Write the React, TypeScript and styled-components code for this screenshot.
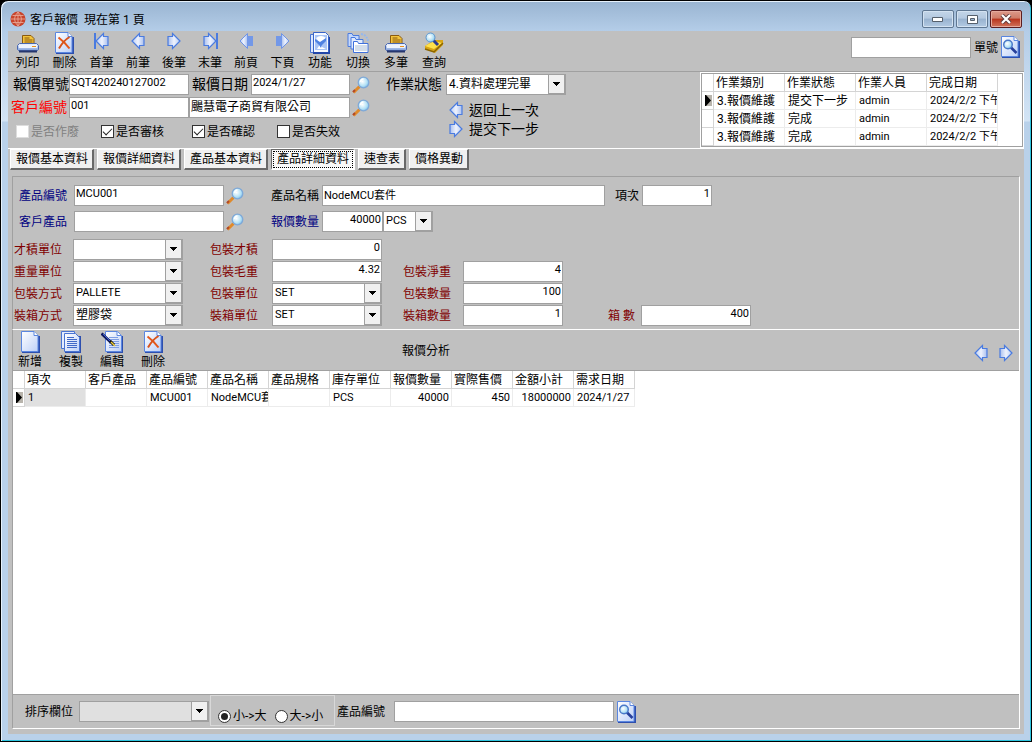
import React from "react";
import styled, { createGlobalStyle, css } from "styled-components";

const face = "#c0c0c0";
const line = "#a0a0a0";
const navy = "#000080";
const maroon = "#800000";

const GlobalStyle = createGlobalStyle`
  *, *::before, *::after { box-sizing: border-box; }
  body {
    margin: 0;
    background: #000;
    color: #000;
    font: 12px/16px Roboto, "Noto Sans CJK TC", sans-serif;
  }
  button, input, select { font: inherit; color: inherit; margin: 0; }
`;

/* ---------- window frame ---------- */

const Window = styled.div`
  display: flex;
  flex-direction: column;
  min-height: 100vh;
  padding: 1px 7px 7px;
  border: 1px solid #000;
  border-radius: 8px 8px 0 0;
  box-shadow: inset 1px 1px 0 #e6f1fb, inset -1px -1px 0 #2cc4de;
  background: linear-gradient(#99b4d1 0, #b4cde8 30px, #d3e4f5 120px, #b9d1ea 121px);
`;

const TitleBar = styled.header`
  display: flex;
  align-items: center;
  height: 29px;
  padding: 5px 2px 0;
`;

const Title = styled.h1`
  flex: 1;
  margin: 0 0 0 4px;
  padding-top: 2px;
  font-size: 12px;
  font-weight: 400;
  white-space: pre;
`;

const CaptionButtons = styled.div`
  display: flex;
  gap: 2px;
`;

const CaptionButton = styled.button<{ $close?: boolean }>`
  display: grid;
  place-items: center;
  width: 32px;
  height: 18px;
  padding: 0;
  border: 1px solid ${(p) => (p.$close ? "#5b1d20" : "#5f7792")};
  border-radius: 2px;
  box-shadow: inset 0 0 0 1px ${(p) => (p.$close ? "#e5a99c" : "#d3e2f1")};
  background: ${(p) =>
    p.$close
      ? "linear-gradient(#dc9a8b, #cf7c68 45%, #b8341d 50%, #d0745c)"
      : "linear-gradient(#c3d5e8, #b4c9e0 45%, #98b2cf 50%, #b3cae3)"};
`;

const Client = styled.main`
  display: flex;
  flex: 1;
  flex-direction: column;
  background: ${face};
`;

/* ---------- toolbars ---------- */

const ToolBar = styled.div`
  display: flex;
  height: 41px;
  padding: 1px 4px 0 1px;
  border-bottom: 1px solid ${line};
`;

const ToolButton = styled.button<{ $width: number }>`
  display: flex;
  flex-direction: column;
  align-items: center;
  justify-content: flex-end;
  gap: 1px;
  width: ${(p) => p.$width}px;
  height: 39px;
  padding: 0;
  border: 0;
  background: none;
  line-height: 16px;
  white-space: nowrap;
`;

const IconSlot = styled.span<{ $top?: boolean }>`
  display: grid;
  align-items: ${(p) => (p.$top ? "start" : "center")};
  justify-items: center;
  height: 22px;
`;

const Spacer = styled.div`
  flex: 1;
`;

const IconButton = styled.button`
  display: grid;
  place-items: center;
  padding: 0;
  border: 0;
  background: none;
`;

const QuickSearch = styled.div`
  display: flex;
  align-items: center;
  gap: 3px;
  height: 30px;
`;

/* ---------- form parts ---------- */

const Label = styled.label<{
  $width?: number;
  $indent?: number;
  $color?: string;
  $large?: boolean;
}>`
  flex: none;
  ${(p) => p.$width && css`width: ${p.$width}px;`}
  height: 21px;
  padding-left: ${(p) => p.$indent ?? 0}px;
  color: ${(p) => p.$color ?? "#000"};
  font-size: ${(p) => (p.$large ? 14 : 12)}px;
  line-height: ${(p) => (p.$large ? 21 : 23)}px;
  white-space: nowrap;
`;

const TextInput = styled.input<{ $width: number; $right?: boolean; $cjk?: boolean }>`
  flex: none;
  width: ${(p) => p.$width}px;
  height: 21px;
  padding: 0 1px 4px;
  border: 1px solid ${line};
  border-radius: 0;
  outline: 0;
  background: #fff;
  font-size: ${(p) => (p.$cjk ? 12 : 11)}px;
  text-align: ${(p) => (p.$right ? "right" : "left")};
`;

const SelectFrame = styled.span<{ $width: number; $muted?: boolean }>`
  display: grid;
  flex: none;
  grid-template-columns: 1fr 16px;
  width: ${(p) => p.$width}px;
  height: 21px;
  border: 1px solid ${line};
  border-right-width: 2px;
  background: ${(p) => (p.$muted ? "#e0e0e0" : "#fff")};
`;

const SelectBox = styled.select<{ $cjk?: boolean }>`
  grid-area: 1 / 1 / 2 / 3;
  appearance: none;
  width: 100%;
  height: 19px;
  padding: 0 17px 2px 2px;
  border: 0;
  border-radius: 0;
  outline: 0;
  background: none;
  font-size: ${(p) => (p.$cjk ? 12 : 11)}px;
`;

const SelectArrow = styled.span`
  display: grid;
  grid-area: 1 / 2;
  place-items: center;
  border: solid ${line};
  border-width: 0 0 1px 1px;
  background: #f0f0f0;
  pointer-events: none;
`;

function Select(props: {
  id: string;
  value: string;
  width: number;
  cjk?: boolean;
  muted?: boolean;
}) {
  return (
    <SelectFrame $width={props.width} $muted={props.muted}>
      <SelectBox id={props.id} $cjk={props.cjk} defaultValue={props.value}>
        <option>{props.value}</option>
      </SelectBox>
      <SelectArrow>
        <svg width="7" height="4" shapeRendering="crispEdges">
          <path d="M0 0h7v1h-1v1h-1v1h-1v1h-1v-1h-1v-1h-1v-1h-1z" />
        </svg>
      </SelectArrow>
    </SelectFrame>
  );
}

const CheckLabel = styled.label<{ $width: number; $off?: boolean }>`
  display: flex;
  align-items: center;
  gap: 2px;
  width: ${(p) => p.$width}px;
  color: ${(p) => (p.$off ? "#808080" : "#000")};
  white-space: nowrap;
`;

const CheckBox = styled.input.attrs({ type: "checkbox" })`
  appearance: none;
  flex: none;
  display: grid;
  place-items: center;
  width: 13px;
  height: 13px;
  border: 1px solid #333;
  background: #fff;
  &:disabled { border-color: #ddd; }
  &:checked::before {
    content: "";
    width: 9px;
    height: 5px;
    margin-top: -3px;
    border: solid #222;
    border-width: 0 0 1px 1px;
    transform: rotate(-45deg);
  }
`;

const Radio = styled.input.attrs({ type: "radio" })`
  appearance: none;
  display: grid;
  place-items: center;
  width: 13px;
  height: 13px;
  border: 1px solid #333;
  border-radius: 50%;
  background: #fff;
  &:checked::before {
    content: "";
    width: 7px;
    height: 7px;
    border-radius: 50%;
    background: #222;
  }
`;

/* ---------- document header ---------- */

const DocHeader = styled.section`
  display: flex;
  height: 77px;
  border-bottom: 1px solid #fff;
`;

const DocFields = styled.div`
  display: grid;
  grid-template-columns: 61px 120px 62px 99px 22px;
  grid-auto-rows: 21px;
  row-gap: 2px;
  padding-top: 2px;
`;

const NameSlot = styled.div`
  display: flex;
  grid-column: span 2;
`;

const CheckRow = styled.div`
  display: flex;
  grid-column: 1 / -1;
  padding: 2px 0 0 8px;
`;

const StatusColumn = styled.div`
  display: flex;
  flex-direction: column;
  padding: 2px 0 0 14px;
`;

const StatusRow = styled.div`
  display: flex;
  margin-bottom: 5px;
`;

const StepButton = styled.button`
  display: flex;
  align-items: center;
  gap: 6px;
  height: 19px;
  padding: 0 0 0 63px;
  border: 0;
  background: none;
  font-size: 14px;
  white-space: nowrap;
`;

/* ---------- grids ---------- */

const HistoryFrame = styled.div`
  width: 324px;
  padding: 1px;
  border: 1px solid #fff;
  outline: 1px solid ${line};
  outline-offset: -2px;
  background: #fff;
`;

const DataTable = styled.table<{ $col: number }>`
  table-layout: fixed;
  border-collapse: separate;
  border-spacing: 0;
  width: 0;
  font-size: 11px;
  col { width: ${(p) => p.$col}px; }
  col:first-child { width: 12px; }
`;

const HeadCell = styled.th`
  height: 18px;
  padding: 0 0 0 2px;
  overflow: hidden;
  border: solid #d4d4d4;
  border-width: 0 1px 1px 0;
  font-size: 12px;
  font-weight: 400;
  text-align: left;
  line-height: 16px;
  white-space: nowrap;
`;

const Cell = styled.td<{ $right?: boolean; $focus?: boolean; $cjk?: boolean }>`
  height: 18px;
  padding: 0 2px 0 3px;
  overflow: hidden;
  border: solid #ececec;
  border-width: 0 1px 1px 0;
  background: ${(p) => (p.$focus ? "#e0e0e0" : "#fff")};
  font-size: ${(p) => (p.$cjk ? 12 : 11)}px;
  line-height: 16px;
  text-align: ${(p) => (p.$right ? "right" : "left")};
  white-space: nowrap;
`;

const MarkerCell = styled.td`
  height: 18px;
  padding: 0 0 0 3px;
  border: solid #d4d4d4;
  border-width: 0 1px 1px 0;
  svg { display: block; background: #b8b4ac; }
`;

/* ---------- tabs and detail panel ---------- */

const Tabs = styled.nav`
  display: flex;
  gap: 3px;
  height: 21px;
  padding-left: 2px;
`;

const Tab = styled.button<{ $active?: boolean }>`
  height: 21px;
  padding: 0 4px 0 5px;
  border: solid;
  border-width: 1px 2px 2px 1px;
  border-color: #fff #696969 #696969 #fff;
  border-radius: 0;
  background: #f0f0f0;
  line-height: 18px;
  white-space: nowrap;
  ${(p) =>
    p.$active &&
    css`
      border-color: #696969 #fff #fff #696969;
      outline: 1px dotted #000;
      outline-offset: -3px;
      background: #f8f8f8;
    `}
`;

const DetailPanel = styled.section`
  margin: 6px 4px 0;
  padding: 8px 0 3px;
  border: 1px solid;
  border-color: ${line} #fff #fff ${line};
`;

const ProductRow = styled.div`
  display: flex;
  height: 21px;
  margin-bottom: 5px;
`;

const LookupSlot = styled.span`
  display: grid;
  place-items: center;
  width: 22px;
`;

const PackingGrid = styled.div`
  display: grid;
  grid-template-columns: 60px 110px 89px 110px 81px 100px 78px 110px;
  grid-auto-rows: 21px;
  row-gap: 1px;
  margin-top: 7px;
`;

const Blank = styled.span<{ $span: number }>`
  grid-column: span ${(p) => p.$span};
`;

/* ---------- line items ---------- */

const LinesPanel = styled.section`
  display: flex;
  flex: 1;
  flex-direction: column;
  margin: 0 4px 5px;
  border: solid;
  border-width: 0 1px 1px;
  border-color: #fff #fff #fff ${line};
`;

const LinesBar = styled.div`
  display: flex;
  align-items: center;
  gap: 7px;
  height: 41px;
  border-bottom: 1px solid ${line};
`;

const LinesTitle = styled.h2`
  margin: 0 0 0 225px;
  padding-top: 2px;
  font-size: 12px;
  font-weight: 400;
`;

const PagerArrows = styled.div`
  display: flex;
  gap: 11px;
  padding: 6px 6px 0 0;
`;

const LinesGrid = styled.div`
  flex: 1;
  background: #fff;
`;

const Footer = styled.footer`
  display: flex;
  height: 34px;
  padding-left: 12px;
  border-top: 1px solid ${line};
`;

const FooterItem = styled.div<{ $gap: number }>`
  display: flex;
  align-items: center;
  height: 33px;
  gap: ${(p) => p.$gap}px;
`;

const OrderGroup = styled.fieldset`
  display: flex;
  align-items: flex-end;
  gap: 8px;
  width: 125px;
  height: 31px;
  margin: 0 2px 0 1px;
  padding: 0 7px 1px;
  border: 1px solid #d8d8d8;
`;

const RadioLabel = styled.label`
  display: flex;
  align-items: center;
  gap: 2px;
  line-height: 16px;
  white-space: nowrap;
`;

/* ---------- icons ---------- */

const GradientDefs = () => (
  <svg width="0" height="0" style={{ position: "absolute" }} aria-hidden="true">
    <defs>
      <linearGradient id="arrowFill" x1="0" y1="0" x2="1" y2="0">
        <stop offset="0" stopColor="#b9cdf3" />
        <stop offset=".5" stopColor="#eef2fd" />
        <stop offset="1" stopColor="#a9bfee" />
      </linearGradient>
      <linearGradient id="pageFill" x1="0" y1="0" x2="1" y2="1">
        <stop offset="0" stopColor="#ffffff" />
        <stop offset="1" stopColor="#bdd0f8" />
      </linearGradient>
      <linearGradient id="printFill" x1="0" y1="0" x2="0" y2="1">
        <stop offset="0" stopColor="#f4f8ff" />
        <stop offset="1" stopColor="#7f9fdb" />
      </linearGradient>
      <radialGradient id="lensFill" cx=".4" cy=".4" r=".7">
        <stop offset="0" stopColor="#ffffff" />
        <stop offset=".6" stopColor="#b5e2f6" />
        <stop offset="1" stopColor="#6fb4e6" />
      </radialGradient>
    </defs>
  </svg>
);

type ArrowProps = { right?: boolean; bar?: boolean; solid?: boolean };

const Arrow = ({ right, bar, solid }: ArrowProps) => (
  <svg width={bar ? 15 : 14} height="18" viewBox={bar ? "-1 0 15 18" : "0 0 14 18"}>
    <g transform={right ? `translate(${bar ? 13 : 14} 0) scale(-1 1)` : undefined}>
      {solid ? (
        <>
          <path d="M8.5 1.5L1 9l7.500 7.500z" fill="url(#arrowFill)" stroke="#6f94e6" />
          <path d="M8 4h6v10h-6z" fill="#7398e8" />
        </>
      ) : (
        <path
          d="M8.500 1.500L1 9l7.500 7.500v-3h4.500v-9h-4.500z"
          fill="url(#arrowFill)"
          stroke="#4a7be0"
          strokeWidth="1.200"
        />
      )}
      {bar && <path d="M-1 1h2v16h-2z" fill="#4a7be0" />}
    </g>
  </svg>
);

const Page = ({ children }: { children?: React.ReactNode }) => (
  <svg width="19" height="22" viewBox="0 0 19 22">
    <path d="M17 5h2v17h-18v-2h16z" fill="#2d4fae" />
    <path d="M.5.5h12.500l4 4v16h-16.500z" fill="url(#pageFill)" stroke="#5a86e0" />
    <path d="M13 .5v4h4" fill="#fff" stroke="#5a86e0" />
    {children}
  </svg>
);

const DeletePage = () => (
  <Page>
    <path d="M3.500 5.500c4 3 8 7 11 11" stroke="#e4571a" strokeWidth="2" fill="none" />
    <path d="M14.500 5c-5 3-8 7-10.500 11.500" stroke="#d8531c" strokeWidth="2" fill="none" />
  </Page>
);

const CopyPages = () => (
  <svg width="20" height="22" viewBox="0 0 20 22">
    <path d="M.5.5h13v17h-13z" fill="#e4ecfd" stroke="#4a74d2" />
    <path d="M17 5h3v17h-16v-2h13z" fill="#2d4fae" />
    <path d="M3.500 2.500h11l4 4v14h-15z" fill="url(#pageFill)" stroke="#4a74d2" />
    <path d="M6 6.500h7M6 8.500h10M6 10.500h10M6 12.500h10M6 14.500h10M6 16.500h10" stroke="#4169c8" />
  </svg>
);

const EditPage = () => (
  <svg width="22" height="22" viewBox="-4 0 22 22">
    <path d="M16 5h2v17h-16v-2h14z" fill="#2d4fae" />
    <path d="M.5.5h12l4 4v16h-16z" fill="url(#pageFill)" stroke="#5a86e0" />
    <path d="M12 .5v4h4" fill="#fff" stroke="#5a86e0" />
    <path d="M4 6.500h9M4 8.500h10M4 10.500h10M4 12.500h10M4 14.500h10M4 16.500h10" stroke="#7f9fe4" />
    <path d="M-3.500 2.500L5.500 11" stroke="#111a5c" strokeWidth="3" />
    <path d="M-2 3L5 10" stroke="#3c60d8" />
    <path d="M5 10l4 4" stroke="#111" strokeWidth="3" />
    <path d="M6 11l4 4" stroke="#f2cf36" strokeWidth="1.500" />
  </svg>
);

const SearchPage = () => (
  <Page>
    <path d="M9.500 11l6 6" stroke="#27409c" strokeWidth="2.600" />
    <circle cx="7" cy="8.500" r="4.300" fill="url(#lensFill)" stroke="#4a78c8" strokeWidth="1.400" />
  </Page>
);

const Printer = () => (
  <svg width="22" height="19" viewBox="0 0 22 19">
    <path d="M5.500 10V1.500h8.500l3 3v5.500z" fill="#f3c33b" stroke="#8a5a10" />
    <path d="M7.500 4h5M7.500 6h8M7.500 8h8" stroke="#8a5a10" />
    <path d="M2.500 9.500h17l2 2v4l-1 1h-19l-1-1v-4z" fill="url(#printFill)" stroke="#4a68b0" />
    <path d="M2 11h18v3h-18z" fill="#eef3fd" />
    <path d="M15 12.500h4" stroke="#e8921e" />
    <path d="M2 17.500h18" stroke="#26376e" strokeWidth="2" />
  </svg>
);

const FunctionIcon = () => (
  <svg width="20" height="22" viewBox="0 0 20 22">
    <path d="M.5 2.500h14v18h-14z" fill="#dbe7fd" stroke="#4a74d2" />
    <path d="M3.500.5h12l3 3v17h-15z" fill="#f6f9ff" stroke="#3763c8" />
    <path d="M5 3h12v15h-12z" fill="#a9c4f5" />
    <path d="M6 6q5-4 10 0l-4 4v5l4 2h-9l2-3v-4z" fill="#fff" />
    <path d="M5 7l5 3 6-4v3l-4 4-1 3-2-3-4-4z" fill="#4f82e2" />
    <path d="M3 21h17V5" stroke="#2346a8" fill="none" strokeWidth="2" />
  </svg>
);

const SwitchIcon = () => (
  <svg width="23" height="22" viewBox="0 0 23 22">
    <path d="M1 14.500V1.500h4l1 2h6v11z" fill="#c5d8fb" stroke="#4a7be0" />
    <path d="M4 17V5.500h4l1 2h7V17z" fill="#e0eafd" stroke="#4a7be0" />
    <path d="M6.500 20.500v-11h4l1 2h9.500v9z" fill="#fff" stroke="#3f70dc" />
    <path d="M8 13h12v6h-12z" fill="#d3ddea" />
    <path d="M14 2q6 1 7 7" stroke="#94b7ee" strokeWidth="2" strokeDasharray="2 1" fill="none" />
  </svg>
);

const QueryIcon = () => (
  <svg width="20" height="22" viewBox="0 0 20 22">
    <path d="M1 14l9-6 9 0v5l-8 8-10-4z" fill="#d9a514" />
    <path d="M1 14l9-5 8 2-8 6z" fill="#ffe14a" />
    <path d="M1 17l9 3 9-9" stroke="#8a6400" strokeWidth="1.500" fill="none" />
    <path d="M9 8l5 5" stroke="#2c3c90" strokeWidth="3" />
    <circle cx="6.500" cy="5.500" r="4.500" fill="url(#lensFill)" stroke="#5f97cf" />
  </svg>
);

const Magnifier = () => (
  <svg width="18" height="18" viewBox="0 0 18 18">
    <path d="M1.500 16.500L7.500 10.500" stroke="#e08a2a" strokeWidth="3" />
    <path d="M1 16L3 14" stroke="#b0482a" strokeWidth="2" />
    <circle cx="11.500" cy="6.500" r="5.300" fill="url(#lensFill)" stroke="#7fa9d8" strokeWidth="1.300" />
    <path d="M8.500 6q.500-3 3-3" stroke="#fff" strokeWidth="1.500" fill="none" />
  </svg>
);

const Globe = () => (
  <svg width="16" height="16" viewBox="0 0 16 16">
    <circle cx="8" cy="8" r="7.500" fill="#c8442c" />
    <path
      d="M8 1v14M1 8h14M2.500 4.500h11M2.500 11.500h11M8 1q-7 7 0 14M8 1q7 7 0 14"
      stroke="#e8a594"
      strokeWidth=".9"
      fill="none"
    />
  </svg>
);

const RowMarker = () => (
  <svg width="7" height="11" viewBox="0 0 7 11">
    <path d="M0 0h1l5 5.500-5 5.500h-1z" />
  </svg>
);

/* ---------- data ---------- */

type Tool = { name: string; width: number; icon: React.ReactNode; top?: boolean };

const tools: Tool[] = [
  { name: "列印", width: 37, icon: <Printer /> },
  { name: "刪除", width: 37, icon: <DeletePage /> },
  { name: "首筆", width: 37, icon: <Arrow bar />, top: true },
  { name: "前筆", width: 36, icon: <Arrow />, top: true },
  { name: "後筆", width: 36, icon: <Arrow right />, top: true },
  { name: "末筆", width: 36, icon: <Arrow right bar />, top: true },
  { name: "前頁", width: 36, icon: <Arrow solid />, top: true },
  { name: "下頁", width: 37, icon: <Arrow right solid />, top: true },
  { name: "功能", width: 38, icon: <FunctionIcon /> },
  { name: "切換", width: 38, icon: <SwitchIcon /> },
  { name: "多筆", width: 38, icon: <Printer /> },
  { name: "查詢", width: 38, icon: <QueryIcon /> },
];

const lineTools: [string, React.ReactNode][] = [
  ["新增", <Page />],
  ["複製", <CopyPages />],
  ["編輯", <EditPage />],
  ["刪除", <DeletePage />],
];

const historyHead = ["作業類別", "作業狀態", "作業人員", "完成日期"];
const history = ["提交下一步", "完成", "完成"];

const tabs = ["報價基本資料", "報價詳細資料", "產品基本資料", "產品詳細資料", "速查表", "價格異動"];

const lineHead = [
  "項次", "客戶產品", "產品編號", "產品名稱", "產品規格",
  "庫存單位", "報價數量", "實際售價", "金額小計", "需求日期",
];
const lineRow = ["1", "", "MCU001", "NodeMCU套件", "", "PCS", "40000", "450", "18000000", "2024/1/27"];

export default function App() {
  return (
    <>
      <GlobalStyle />
      <GradientDefs />
      <Window>
        <TitleBar>
          <Globe />
          <Title>{"客戶報價  現在第 1 頁"}</Title>
          <CaptionButtons>
            <CaptionButton aria-label="最小化">
              <svg width="12" height="5">
                <path d="M.5.5h10v4h-10z" fill="#fff" stroke="#56606c" />
              </svg>
            </CaptionButton>
            <CaptionButton aria-label="最大化">
              <svg width="11" height="9">
                <path d="M.5.5h10v8h-10z" fill="#fff" stroke="#56606c" />
                <path d="M3.500 3.500h4v2h-4z" fill="#9cb5d0" stroke="#56606c" />
              </svg>
            </CaptionButton>
            <CaptionButton aria-label="關閉" $close>
              <svg width="12" height="10" viewBox="0 0 12 10">
                <path d="M2 1l8 8M10 1l-8 8" stroke="#5b3a3c" strokeWidth="4" />
                <path d="M2 1l8 8M10 1l-8 8" stroke="#fff" strokeWidth="2.200" />
              </svg>
            </CaptionButton>
          </CaptionButtons>
        </TitleBar>

        <Client>
          <ToolBar>
            {tools.map((tool) => (
              <ToolButton key={tool.name} $width={tool.width}>
                <IconSlot $top={tool.top}>{tool.icon}</IconSlot>
                {tool.name}
              </ToolButton>
            ))}
            <Spacer />
            <QuickSearch>
              <TextInput id="docSearch" $width={120} />
              <Label htmlFor="docSearch">單號</Label>
              <IconButton aria-label="搜尋單號"><SearchPage /></IconButton>
            </QuickSearch>
          </ToolBar>

          <DocHeader>
            <DocFields>
              <Label htmlFor="docNo" $indent={5} $large>報價單號</Label>
              <TextInput id="docNo" $width={120} defaultValue="SQT420240127002" />
              <Label htmlFor="docDate" $indent={3} $large>報價日期</Label>
              <TextInput id="docDate" $width={99} defaultValue="2024/1/27" />
              <IconButton aria-label="選擇日期"><Magnifier /></IconButton>

              <Label htmlFor="custNo" $indent={3} $color="#ff0000" $large>客戶編號</Label>
              <TextInput id="custNo" $width={120} defaultValue="001" />
              <NameSlot>
                <TextInput aria-label="客戶名稱" $width={161} $cjk defaultValue="颺慧電子商貿有限公司" />
              </NameSlot>
              <IconButton aria-label="選擇客戶"><Magnifier /></IconButton>

              <CheckRow>
                <CheckLabel $width={85} $off><CheckBox disabled />是否作廢</CheckLabel>
                <CheckLabel $width={91}><CheckBox defaultChecked />是否審核</CheckLabel>
                <CheckLabel $width={85}><CheckBox defaultChecked />是否確認</CheckLabel>
                <CheckLabel $width={66}><CheckBox />是否失效</CheckLabel>
              </CheckRow>
            </DocFields>

            <StatusColumn>
              <StatusRow>
                <Label htmlFor="status" $width={60} $large>作業狀態</Label>
                <Select id="status" width={120} value="4.資料處理完畢" cjk />
              </StatusRow>
              <StepButton><Arrow />返回上一次</StepButton>
              <StepButton><Arrow right />提交下一步</StepButton>
            </StatusColumn>
            <Spacer />

            <HistoryFrame>
              <DataTable $col={71}>
                <colgroup><col /><col /><col /><col /><col /></colgroup>
                <thead>
                  <tr>
                    <HeadCell />
                    {historyHead.map((h) => <HeadCell key={h}>{h}</HeadCell>)}
                  </tr>
                </thead>
                <tbody>
                  {history.map((state, i) => (
                    <tr key={i}>
                      <MarkerCell>{i === 0 && <RowMarker />}</MarkerCell>
                      <Cell $cjk>3.報價維護</Cell>
                      <Cell $cjk>{state}</Cell>
                      <Cell>admin</Cell>
                      <Cell>2024/2/2 下午</Cell>
                    </tr>
                  ))}
                </tbody>
              </DataTable>
            </HistoryFrame>
          </DocHeader>

          <Tabs>
            {tabs.map((t) => <Tab key={t} $active={t === "產品詳細資料"}>{t}</Tab>)}
          </Tabs>

          <DetailPanel>
            <ProductRow>
              <Label htmlFor="prodNo" $width={61} $indent={6} $color={navy}>產品編號</Label>
              <TextInput id="prodNo" $width={150} defaultValue="MCU001" />
              <LookupSlot><IconButton aria-label="選擇產品"><Magnifier /></IconButton></LookupSlot>
              <Label htmlFor="prodName" $width={76} $indent={25}>產品名稱</Label>
              <TextInput id="prodName" $width={283} defaultValue="NodeMCU套件" />
              <Label htmlFor="itemNo" $width={37} $indent={10}>項次</Label>
              <TextInput id="itemNo" $width={70} $right defaultValue="1" />
            </ProductRow>
            <ProductRow>
              <Label htmlFor="custProd" $width={61} $indent={6} $color={navy}>客戶產品</Label>
              <TextInput id="custProd" $width={150} />
              <LookupSlot><IconButton aria-label="選擇客戶產品"><Magnifier /></IconButton></LookupSlot>
              <Label htmlFor="qty" $width={76} $indent={25} $color={navy}>報價數量</Label>
              <TextInput id="qty" $width={61} $right defaultValue="40000" />
              <Select id="unit" width={50} value="PCS" />
            </ProductRow>

            <PackingGrid>
              <Label htmlFor="volUnit" $indent={1} $color={maroon}>才積單位</Label>
              <Select id="volUnit" width={110} value="" />
              <Label htmlFor="vol" $indent={27} $color={maroon}>包裝才積</Label>
              <TextInput id="vol" $width={110} $right defaultValue="0" />
              <Blank $span={4} />

              <Label htmlFor="wtUnit" $indent={1} $color={maroon}>重量單位</Label>
              <Select id="wtUnit" width={110} value="" />
              <Label htmlFor="gross" $indent={27} $color={maroon}>包裝毛重</Label>
              <TextInput id="gross" $width={110} $right defaultValue="4.32" />
              <Label htmlFor="net" $indent={21} $color={maroon}>包裝淨重</Label>
              <TextInput id="net" $width={100} $right defaultValue="4" />
              <Blank $span={2} />

              <Label htmlFor="packWay" $indent={1} $color={maroon}>包裝方式</Label>
              <Select id="packWay" width={110} value="PALLETE" />
              <Label htmlFor="packUnit" $indent={27} $color={maroon}>包裝單位</Label>
              <Select id="packUnit" width={110} value="SET" />
              <Label htmlFor="packQty" $indent={21} $color={maroon}>包裝數量</Label>
              <TextInput id="packQty" $width={100} $right defaultValue="100" />
              <Blank $span={2} />

              <Label htmlFor="boxWay" $indent={1} $color={maroon}>裝箱方式</Label>
              <Select id="boxWay" width={110} value="塑膠袋" cjk />
              <Label htmlFor="boxUnit" $indent={27} $color={maroon}>裝箱單位</Label>
              <Select id="boxUnit" width={110} value="SET" />
              <Label htmlFor="boxQty" $indent={21} $color={maroon}>裝箱數量</Label>
              <TextInput id="boxQty" $width={100} $right defaultValue="1" />
              <Label htmlFor="boxes" $indent={45} $color={maroon}>箱 數</Label>
              <TextInput id="boxes" $width={110} $right defaultValue="400" />
            </PackingGrid>
          </DetailPanel>

          <LinesPanel>
            <LinesBar>
              {lineTools.map(([name, icon]) => (
                <ToolButton key={name} $width={34}>
                  <IconSlot>{icon}</IconSlot>
                  {name}
                </ToolButton>
              ))}
              <LinesTitle>報價分析</LinesTitle>
              <Spacer />
              <PagerArrows>
                <IconButton aria-label="上一筆"><Arrow /></IconButton>
                <IconButton aria-label="下一筆"><Arrow right /></IconButton>
              </PagerArrows>
            </LinesBar>

            <LinesGrid>
              <DataTable $col={61}>
                <colgroup>
                  <col />
                  {lineHead.map((h) => <col key={h} />)}
                </colgroup>
                <thead>
                  <tr>
                    <HeadCell />
                    {lineHead.map((h) => <HeadCell key={h}>{h}</HeadCell>)}
                  </tr>
                </thead>
                <tbody>
                  <tr>
                    <MarkerCell><RowMarker /></MarkerCell>
                    {lineRow.map((v, i) => (
                      <Cell key={i} $focus={i === 0} $right={i > 5 && i < 9}>{v}</Cell>
                    ))}
                  </tr>
                </tbody>
              </DataTable>
            </LinesGrid>

            <Footer>
              <FooterItem $gap={6}>
                <Label htmlFor="sortBy">排序欄位</Label>
                <Select id="sortBy" width={130} value="" muted />
              </FooterItem>
              <OrderGroup aria-label="排序方式">
                <RadioLabel><Radio name="order" defaultChecked />{"小->大"}</RadioLabel>
                <RadioLabel><Radio name="order" />{"大->小"}</RadioLabel>
              </OrderGroup>
              <FooterItem $gap={9}>
                <Label htmlFor="findProd">產品編號</Label>
                <TextInput id="findProd" $width={220} />
              </FooterItem>
              <FooterItem $gap={3}>
                <span />
                <IconButton aria-label="搜尋產品"><SearchPage /></IconButton>
              </FooterItem>
            </Footer>
          </LinesPanel>
        </Client>
      </Window>
    </>
  );
}
